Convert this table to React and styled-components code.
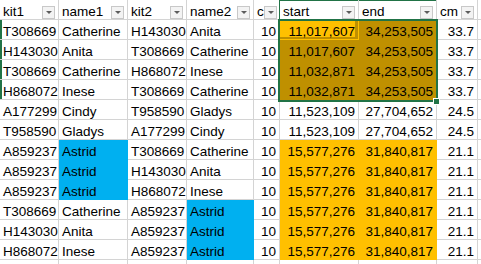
import React from "react";
import styled, { createGlobalStyle } from "styled-components";

const Global = createGlobalStyle`
  html, body { margin: 0; padding: 0; background: #fff; }
  body { font-family: "Liberation Sans", Arial, sans-serif; }
`;

const GRID = "#d4d4d4";
const GREEN = "#217346";
const ORANGE = "#FFC000";
const GOLD = "#BF9000";
const BLUE = "#00B0F0";

const Sheet = styled.div`
  position: relative;
  width: 481px;
  height: 264px;
  overflow: hidden;
  background: #fff;
`;

const Grid = styled.div`
  display: grid;
  grid-template-columns: 59px 69px 59px 67px 26px 79px 78px 41px 1fr;
  grid-auto-rows: 20px;
`;

const Cell = styled.div`
  box-sizing: border-box;
  height: 20px;
  padding: 5px ${(p) => (p.$num ? "3px" : "1px")} 0 3px;
  border-right: 1px solid ${(p) => (p.$fill ? p.$fill : GRID)};
  border-bottom: 1px solid ${(p) => (p.$fill ? p.$fill : GRID)};
  background: ${(p) => p.$fill || "#fff"};
  font-size: 13.5px;
  line-height: 13px;
  color: #000;
  white-space: nowrap;
  overflow: hidden;
  text-align: ${(p) => (p.$num ? "right" : "left")};
  box-shadow: ${(p) =>
    p.$active
      ? `inset -3px -2px 0 0 ${GOLD}`
      : p.$rowMark
      ? `inset 2px 0 0 0 ${GREEN}`
      : "none"};
`;

const HeaderCell = styled(Cell)`
  display: flex;
  align-items: flex-start;
  padding-right: ${(p) => (p.$tight ? "2px" : "3px")};
  border-right-color: ${(p) => (p.$greenRight ? GREEN : GRID)};
  box-shadow: ${(p) => (p.$greenTop ? `inset 0 1px 0 0 ${GREEN}` : "none")};
`;

const HeaderLabel = styled.span`
  flex: 1 1 auto;
  min-width: 0;
  overflow: hidden;
`;

const DropBox = styled.span`
  flex: 0 0 auto;
  box-sizing: border-box;
  width: 13px;
  height: 13px;
  margin-top: 1px;
  border: 1px solid #c8c8c8;
  background: #f3f3f3;
  display: flex;
  align-items: center;
  justify-content: center;
  &::after {
    content: "";
    width: 0;
    height: 0;
    border-left: 3px solid transparent;
    border-right: 3px solid transparent;
    border-top: 3px solid #5c5c5c;
  }
`;

const Selection = styled.div`
  position: absolute;
  left: 278px;
  top: 19px;
  width: 160px;
  height: 83px;
  box-sizing: border-box;
  border: 2px solid ${GREEN};
  pointer-events: none;
`;

const FillHandle = styled.div`
  position: absolute;
  left: 433px;
  top: 98px;
  width: 7px;
  height: 7px;
  box-sizing: border-box;
  background: ${GREEN};
  border: 1px solid #fff;
`;

const headers = ["kit1", "name1", "kit2", "name2", "c", "start", "end", "cm"];

const rows = [
  ["T308669", "Catherine", "H143030", "Anita", "10", "11,017,607", "34,253,505", "33.7"],
  ["H143030", "Anita", "T308669", "Catherine", "10", "11,017,607", "34,253,505", "33.7"],
  ["T308669", "Catherine", "H868072", "Inese", "10", "11,032,871", "34,253,505", "33.7"],
  ["H868072", "Inese", "T308669", "Catherine", "10", "11,032,871", "34,253,505", "33.7"],
  ["A177299", "Cindy", "T958590", "Gladys", "10", "11,523,109", "27,704,652", "24.5"],
  ["T958590", "Gladys", "A177299", "Cindy", "10", "11,523,109", "27,704,652", "24.5"],
  ["A859237", "Astrid", "T308669", "Catherine", "10", "15,577,276", "31,840,817", "21.1"],
  ["A859237", "Astrid", "H143030", "Anita", "10", "15,577,276", "31,840,817", "21.1"],
  ["A859237", "Astrid", "H868072", "Inese", "10", "15,577,276", "31,840,817", "21.1"],
  ["T308669", "Catherine", "A859237", "Astrid", "10", "15,577,276", "31,840,817", "21.1"],
  ["H143030", "Anita", "A859237", "Astrid", "10", "15,577,276", "31,840,817", "21.1"],
  ["H868072", "Inese", "A859237", "Astrid", "10", "15,577,276", "31,840,817", "21.1"],
];

const numCols = new Set([4, 5, 6, 7]);

function fillFor(r, c) {
  if (r <= 3 && (c === 5 || c === 6)) {
    if (r === 0 && c === 5) return ORANGE;
    return GOLD;
  }
  if (r >= 6 && (c === 5 || c === 6)) return ORANGE;
  if (r >= 6 && r <= 8 && c === 1) return BLUE;
  if (r >= 9 && c === 3) return BLUE;
  return null;
}

export default function App() {
  return (
    <>
      <Global />
      <Sheet>
        <Grid>
          {headers.map((h, i) => (
            <HeaderCell
              key={"h" + i}
              $tight={i === 4}
              $greenRight={i === 4}
              $greenTop={i === 5 || i === 6}
            >
              <HeaderLabel>{h}</HeaderLabel>
              <DropBox />
            </HeaderCell>
          ))}
          <Cell key="h-extra" />
          {rows.map((row, r) => (
            <React.Fragment key={"r" + r}>
              {row.map((v, c) => (
                <Cell
                  key={c}
                  $num={numCols.has(c)}
                  $fill={fillFor(r, c)}
                  $active={r === 0 && c === 5}
                  $rowMark={r <= 3 && c === 0}
                >
                  {v}
                </Cell>
              ))}
              <Cell />
            </React.Fragment>
          ))}
          {headers.map((_, i) => (
            <Cell key={"e" + i} />
          ))}
          <Cell />
        </Grid>
        <Selection />
        <FillHandle />
      </Sheet>
    </>
  );
}
